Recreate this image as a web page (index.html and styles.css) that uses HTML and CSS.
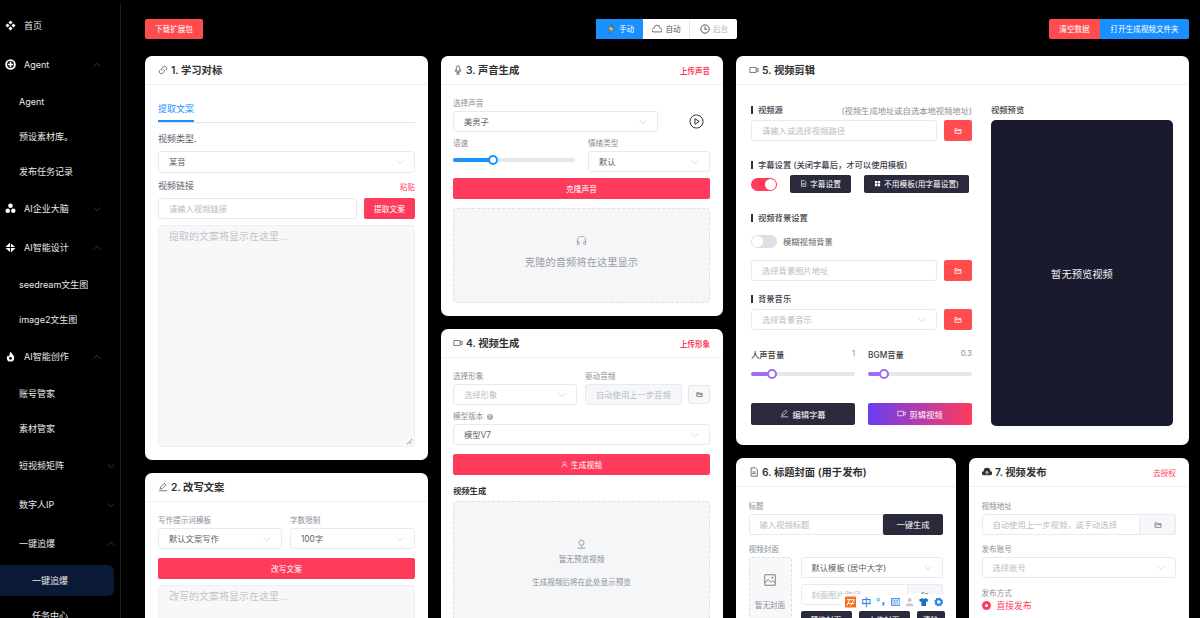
FILE: index.html
```html
<!DOCTYPE html>
<html lang="zh-CN">
<head>
    <meta charset="UTF-8">
    <title>一键追爆</title>
    <link rel="stylesheet" href="styles.css">
</head>
<body>
    <svg class="defs" width="0" height="0">
        <symbol id="i-folder" viewBox="0 0 24 24"><path d="M3 19V5h6l2 3h10v11z M3 11h18" fill="none" stroke="currentColor" stroke-width="2.4"/></symbol>
        <symbol id="i-chev" viewBox="0 0 24 24"><path d="M2 7l10 10L22 7" fill="none" stroke="currentColor" stroke-width="1.6"/></symbol>
        <symbol id="i-video" viewBox="0 0 24 24"><path d="M2 6h15v12H2z M17 10l5-2v8l-5-2" fill="none" stroke="currentColor" stroke-width="1.8"/></symbol>
        <symbol id="i-edit" viewBox="0 0 24 24"><path d="M5 17l1-5L15 3l4 4-9 9z M2 21h20" fill="none" stroke="currentColor" stroke-width="1.8"/></symbol>
    </svg>

    <div class="page">
        <aside class="sidebar">
            <div class="menu-title"><svg class="menu-icon" viewBox="0 0 24 24"><path d="M12 1l4.500 4.500L12 10 7.500 5.500z M12 14l4.500 4.500L12 23l-4.500-4.500z M5.500 7.500L10 12l-4.500 4.500L1 12z M18.500 7.500L23 12l-4.500 4.500L14 12z" fill="#fff"/></svg>首页</div>
            <div class="menu-title"><svg class="menu-icon" viewBox="0 0 24 24"><circle cx="12" cy="12" r="9.500" fill="none" stroke="#fff" stroke-width="4"/><path d="M12 6v12 M6 12h12" stroke="#fff" stroke-width="3.500"/></svg>Agent<svg class="chev up"><use href="#i-chev"/></svg></div>
            <div class="menu-item">Agent</div>
            <div class="menu-item">预设素材库。</div>
            <div class="menu-item">发布任务记录</div>
            <div class="menu-title"><svg class="menu-icon" viewBox="0 0 24 24"><circle cx="12" cy="6" r="5" fill="#fff"/><circle cx="6" cy="17" r="5" fill="#fff"/><circle cx="18" cy="17" r="5" fill="#fff"/><circle cx="12" cy="14" r="2" fill="#000"/></svg>AI企业大脑<svg class="chev"><use href="#i-chev"/></svg></div>
            <div class="menu-title"><svg class="menu-icon" viewBox="0 0 24 24"><path d="M11 1v10H1l5-5z M13 3l9 8h-9z M1 13h10v9z M13 13h10l-5 5-5 5z" fill="#fff"/></svg>AI智能设计<svg class="chev up"><use href="#i-chev"/></svg></div>
            <div class="menu-item">seedream文生图</div>
            <div class="menu-item">image2文生图</div>
            <div class="menu-title"><svg class="menu-icon" viewBox="0 0 24 24"><path d="M12 1c1 4 8 7 8 14a8 8 0 0 1-16 0c0-3 2-5 3-6 0 2 1 3 2 3 1-4 1-7 3-11z" fill="#fff"/><circle cx="12" cy="16" r="3" fill="#000"/></svg>AI智能创作<svg class="chev up"><use href="#i-chev"/></svg></div>
            <div class="menu-item">账号管家</div>
            <div class="menu-item">素材管家</div>
            <div class="menu-title plain">短视频矩阵<svg class="chev"><use href="#i-chev"/></svg></div>
            <div class="menu-title plain">数字人IP<svg class="chev"><use href="#i-chev"/></svg></div>
            <div class="menu-title plain">一键追爆<svg class="chev up"><use href="#i-chev"/></svg></div>
            <div class="menu-item sub active">一键追爆</div>
            <div class="menu-item sub">任务中心</div>
        </aside>

        <main class="main">
            <div class="toolbar">
                <button class="tool-btn red">下载扩展包</button>
                <div class="segment">
                    <div class="seg-item on"><svg viewBox="0 0 24 24"><path d="M14 1L4 14h7l-2 9 11-14h-7z" fill="#ffc53d" stroke="#333" stroke-width="1"/></svg>手动</div>
                    <div class="seg-item"><svg viewBox="0 0 24 24"><path d="M2 19a5 5 0 0 1 3-9 7 7 0 0 1 14 0 5 5 0 0 1 3 9z" fill="none" stroke="#555" stroke-width="2"/></svg>自动</div>
                    <div class="seg-item muted"><svg viewBox="0 0 24 24"><circle cx="12" cy="12" r="10" fill="none" stroke="#555" stroke-width="2.400"/><path d="M12 6v7h5" fill="none" stroke="#555" stroke-width="2.400"/></svg>后台</div>
                </div>
                <div class="tool-right">
                    <button class="tool-btn red">清空数据</button>
                    <button class="tool-btn blue">打开生成视频文件夹</button>
                </div>
            </div>

            <div class="columns">
                <div class="col col-1">
                    <section class="card">
                        <header class="card-head">
                            <h2><svg class="head-icon" viewBox="0 0 24 24"><path d="M10 14a5 5 0 0 1 0-7l3-3a5 5 0 0 1 7 7l-2 2 M14 10a5 5 0 0 1 0 7l-3 3a5 5 0 0 1-7-7l2-2" fill="none" stroke="#555" stroke-width="1.800"/></svg>1. 学习对标</h2>
                        </header>
                        <div class="card-body">
                            <div class="tabs"><span class="tab">提取文案</span></div>
                            <div class="label big mt-10">视频类型.</div>
                            <div class="field tall">某音<svg class="chev"><use href="#i-chev"/></svg></div>
                            <div class="label-row paste-row"><span class="label big">视频链接</span><a class="link small">粘贴</a></div>
                            <div class="row gap-7">
                                <div class="field grow ph">请输入视频链接</div>
                                <button class="btn pink w-51">提取文案</button>
                            </div>
                            <div class="textarea tall-area">提取的文案将显示在这里...<svg class="resize" viewBox="0 0 8 8"><path d="M1 7l6-6 M4 7l3-3" stroke="#888" stroke-width="1"/></svg></div>
                        </div>
                    </section>
                    <section class="card fill">
                        <header class="card-head">
                            <h2><svg class="head-icon"><use href="#i-edit"/></svg>2. 改写文案</h2>
                        </header>
                        <div class="card-body">
                            <div class="split gap-8">
                                <div class="cell"><div class="label">写作提示词模板</div><div class="field">默认文案写作<svg class="chev"><use href="#i-chev"/></svg></div></div>
                                <div class="cell"><div class="label">字数限制</div><div class="field">100字<svg class="chev"><use href="#i-chev"/></svg></div></div>
                            </div>
                            <button class="btn pink full mt-9">改写文案</button>
                            <div class="textarea">改写的文案将显示在这里...</div>
                        </div>
                    </section>
                </div>

                <div class="col col-2">
                    <section class="card">
                        <header class="card-head">
                            <h2><svg class="head-icon" viewBox="0 0 24 24"><rect x="8" y="2" width="8" height="13" rx="4" fill="none" stroke="#555" stroke-width="2"/><path d="M5 11a7 7 0 0 0 14 0 M12 18v4 M8 22h8" fill="none" stroke="#555" stroke-width="2"/></svg>3. 声音生成</h2>
                            <a class="link">上传声音</a>
                        </header>
                        <div class="card-body">
                            <div class="label">选择声音</div>
                            <div class="row">
                                <div class="field w-205">美男子<svg class="chev"><use href="#i-chev"/></svg></div>
                                <svg class="play" viewBox="0 0 24 24"><circle cx="12" cy="12" r="10.500" fill="none" stroke="#333" stroke-width="1.600"/><path d="M9.500 7.500l7 4.500-7 4.500z" fill="none" stroke="#333" stroke-width="1.600"/></svg>
                            </div>
                            <div class="split gap-13 mt-5">
                                <div class="cell"><div class="label">语速</div><div class="slider blue tall-slider"><i class="fill-bar" style="width:33%"></i></div></div>
                                <div class="cell"><div class="label">情绪类型</div><div class="field">默认<svg class="chev"><use href="#i-chev"/></svg></div></div>
                            </div>
                            <button class="btn pink full mt-6">克隆声音</button>
                            <div class="dash-box voice-box">
                                <svg class="box-icon" viewBox="0 0 24 24"><path d="M3 17v-5a9 9 0 0 1 18 0v5" fill="none" stroke="#8a8f99" stroke-width="1.600"/><rect x="3" y="14" width="4" height="7" rx="1.500" fill="none" stroke="#8a8f99" stroke-width="1.600"/><rect x="17" y="14" width="4" height="7" rx="1.500" fill="none" stroke="#8a8f99" stroke-width="1.600"/></svg>
                                <div class="box-text">克隆的音频将在这里显示</div>
                            </div>
                        </div>
                    </section>
                    <section class="card fill">
                        <header class="card-head">
                            <h2><svg class="head-icon"><use href="#i-video"/></svg>4. 视频生成</h2>
                            <a class="link">上传形象</a>
                        </header>
                        <div class="card-body">
                            <div class="row gap-8">
                                <div class="cell w-124"><div class="label">选择形象</div><div class="field ph">选择形象<svg class="chev"><use href="#i-chev"/></svg></div></div>
                                <div class="cell grow"><div class="label">驱动音频</div>
                                    <div class="row gap-6">
                                        <div class="field grow ph disabled">自动使用上一步音频</div>
                                        <button class="icon-btn"><svg><use href="#i-folder"/></svg></button>
                                    </div>
                                </div>
                            </div>
                            <div class="label mt-5">模型版本 <span class="help">?</span></div>
                            <div class="field">模型V7<svg class="chev"><use href="#i-chev"/></svg></div>
                            <button class="btn pink full mt-9"><svg class="btn-icon" viewBox="0 0 24 24"><circle cx="12" cy="8" r="5" fill="none" stroke="#fff" stroke-width="2"/><path d="M3 22a9 9 0 0 1 18 0" fill="none" stroke="#fff" stroke-width="2"/></svg>生成视频</button>
                            <div class="label strong mt-9">视频生成</div>
                            <div class="dash-box video-box">
                                <svg class="box-icon" viewBox="0 0 24 24"><circle cx="12" cy="8" r="5.500" fill="none" stroke="#8a8f99" stroke-width="1.800"/><path d="M12 14v5 M3 20h18" fill="none" stroke="#8a8f99" stroke-width="1.800"/></svg>
                                <div class="box-note">暂无预览视频</div>
                                <div class="box-note second">生成视频后将在此处显示预览</div>
                            </div>
                        </div>
                    </section>
                </div>

                <div class="col col-3">
                    <section class="card">
                        <header class="card-head">
                            <h2><svg class="head-icon"><use href="#i-video"/></svg>5. 视频剪辑</h2>
                        </header>
                        <div class="edit-body">
                            <div class="edit-left">
                                <div class="label-row">
                                    <span class="bar-label">视频源</span>
                                    <span class="hint">(视频生成地址或自选本地视频地址)</span>
                                </div>
                                <div class="row gap-7 mt-4">
                                    <div class="field grow ph">请输入或选择视频路径</div>
                                    <button class="red-btn"><svg><use href="#i-folder"/></svg></button>
                                </div>
                                <div class="bar-label mt-18">字幕设置 (关闭字幕后，才可以使用模板)</div>
                                <div class="row gap-13 mt-4 align-center">
                                    <span class="switch on"></span>
                                    <button class="dark-btn w-61"><svg viewBox="0 0 24 24"><path d="M5 2h10l5 5v15H5z M8 12h8 M8 16h8" fill="none" stroke="#fff" stroke-width="2.200"/></svg>字幕设置</button>
                                    <button class="dark-btn w-105"><svg viewBox="0 0 24 24"><path d="M3 3h8v8H3z M13 3h8v8h-8z M3 13h8v8H3z M13 13h8v8h-8z" fill="#fff"/></svg>不用模板(用字幕设置)</button>
                                </div>
                                <div class="bar-label mt-19">视频背景设置</div>
                                <div class="row switch-row">
                                    <span class="switch"></span>
                                    <span class="switch-text">模糊视频背景</span>
                                </div>
                                <div class="row gap-7 mt-12">
                                    <div class="field grow ph">选择背景图片地址</div>
                                    <button class="red-btn"><svg><use href="#i-folder"/></svg></button>
                                </div>
                                <div class="bar-label mt-12">背景音乐</div>
                                <div class="row gap-7 mt-4">
                                    <div class="field grow ph">选择背景音乐<svg class="chev"><use href="#i-chev"/></svg></div>
                                    <button class="red-btn"><svg><use href="#i-folder"/></svg></button>
                                </div>
                                <div class="split gap-13 mt-19">
                                    <div class="cell">
                                        <div class="label-row"><span class="vol-label">人声音量</span><span class="vol-val">1</span></div>
                                        <div class="slider purple vol-slider"><i class="fill-bar" style="width:20%"></i></div>
                                    </div>
                                    <div class="cell">
                                        <div class="label-row"><span class="vol-label">BGM音量</span><span class="vol-val">0.3</span></div>
                                        <div class="slider purple vol-slider"><i class="fill-bar" style="width:15%"></i></div>
                                    </div>
                                </div>
                                <div class="split gap-13 edit-actions">
                                    <button class="dark-btn action"><svg><use href="#i-edit"/></svg>编辑字幕</button>
                                    <button class="grad-btn action"><svg><use href="#i-video"/></svg>剪辑视频</button>
                                </div>
                            </div>
                            <div class="edit-right">
                                <div class="bar-label no-bar">视频预览</div>
                                <div class="preview">暂无预览视频</div>
                            </div>
                        </div>
                    </section>
                    <div class="bottom-row">
                        <section class="card fill">
                            <header class="card-head">
                                <h2><svg class="head-icon" viewBox="0 0 24 24"><path d="M5 2h10l5 5v15H5z M8 12h8 M8 16h8" fill="none" stroke="#555" stroke-width="2"/></svg>6. 标题封面 (用于发布)</h2>
                            </header>
                            <div class="card-body pt-13">
                                <div class="label">标题</div>
                                <div class="row">
                                    <div class="field grow ph joined">输入视频标题</div>
                                    <button class="dark-btn gen-btn">一键生成</button>
                                </div>
                                <div class="label mt-8">视频封面</div>
                                <div class="row gap-9">
                                    <div class="cover">
                                        <svg class="cover-icon" viewBox="0 0 24 24"><path d="M3 3h18v18H3z M3 17l6-6 5 5 3-3 4 4" fill="none" stroke="#777" stroke-width="1.600"/><circle cx="16" cy="8" r="1.500" fill="#777"/></svg>
                                        <span>暂无封面</span>
                                    </div>
                                    <div class="cell grow">
                                        <div class="field">默认模板 (居中大字)<svg class="chev"><use href="#i-chev"/></svg></div>
                                        <div class="row mt-6">
                                            <div class="field grow ph joined">封面图片路径</div>
                                            <div class="append w-35"><svg><use href="#i-folder"/></svg></div>
                                        </div>
                                        <div class="row gap-7 mt-6">
                                            <button class="dark-btn cover-btn">预览封面</button>
                                            <button class="dark-btn cover-btn">上传封面</button>
                                            <button class="dark-btn cover-btn last">清除</button>
                                        </div>
                                    </div>
                                </div>
                            </div>
                        </section>
                        <section class="card fill">
                            <header class="card-head">
                                <h2><svg class="head-icon" viewBox="0 0 24 24"><path d="M5 20a5 5 0 0 1-1-10 8 8 0 0 1 16 0 5 5 0 0 1-1 10z" fill="#333"/><path d="M12 18v-7 M8.500 14l3.500-3.500 3.500 3.500" fill="none" stroke="#fff" stroke-width="2"/></svg>7. 视频发布</h2>
                                <a class="link big-link">去授权</a>
                            </header>
                            <div class="card-body pt-13">
                                <div class="label">视频地址</div>
                                <div class="row">
                                    <div class="field grow ph joined">自动使用上一步视频，或手动选择</div>
                                    <div class="append w-36"><svg><use href="#i-folder"/></svg></div>
                                </div>
                                <div class="label mt-8">发布账号</div>
                                <div class="field ph">选择账号<svg class="chev"><use href="#i-chev"/></svg></div>
                                <div class="label mt-9">发布方式</div>
                                <div class="radio-row"><span class="radio"></span>直接发布</div>
                            </div>
                        </section>
                    </div>
                </div>
            </div>
        </main>
    </div>

    <div class="ime">
        <svg class="ime-logo" viewBox="0 0 12 12"><rect width="12" height="12" rx="1" fill="#f4701f"/><path d="M2 3.500h8M5 3.500L2 10M10 3.500L6 10M3 7.500h7" fill="none" stroke="#fff" stroke-width="1"/></svg>
        <span class="ime-zh">中</span>
        <svg viewBox="0 0 12 12"><circle cx="3" cy="3" r="1.600" fill="none" stroke="#2b83e0" stroke-width="1.100"/><path d="M8 7h2v1.500l-1.500 2" fill="none" stroke="#2b83e0" stroke-width="1.600"/></svg>
        <svg viewBox="0 0 12 12"><rect x=".5" y="1.500" width="11" height="9" fill="#cfe3f8" stroke="#2b83e0"/><path d="M2 4h8M2 6h8M3 8.500h6" stroke="#2b83e0" stroke-dasharray="1 1"/></svg>
        <svg viewBox="0 0 12 12"><circle cx="6" cy="3.500" r="2.500" fill="#c4c8ce"/><path d="M1 11.500a5 4 0 0 1 10 0z" fill="#c4c8ce"/></svg>
        <svg viewBox="0 0 12 12"><path d="M4 1L0 3l1.500 3L3 5v6h6V5l1.500 1L12 3 8 1 6 2.500z" fill="#1c6fc4"/></svg>
        <svg viewBox="0 0 12 12"><circle cx="6" cy="6" r="3.500" fill="none" stroke="#2b83e0" stroke-width="2.400"/><circle cx="6" cy="6" r="5" fill="none" stroke="#2b83e0" stroke-width="1.400" stroke-dasharray="2 1.900"/></svg>
    </div>
</body>
</html>
```
FILE: styles.css
```css
html, body {
    margin: 0;
    height: 618px;
    overflow: hidden;
    background: #000;
}

body {
    font-family: Inter, "Noto Sans CJK SC", sans-serif;
    font-size: 8.3px;
    color: #606266;
}

.defs {
    position: absolute;
}

button {
    font-family: inherit;
    border: none;
    cursor: pointer;
    padding: 0;
}

.page {
    display: flex;
    height: 618px;
}

/* sidebar */
.sidebar {
    width: 120px;
    flex: none;
    margin-top: 4px;
    padding-top: 2px;
    border-right: 1px solid #1e1e1e;
    overflow: hidden;
    color: #e8e8e8;
    font-size: 9px;
}

.menu-title {
    display: flex;
    align-items: center;
    height: 39px;
    padding-left: 5px;
    position: relative;
}

.menu-title.plain {
    padding-left: 19px;
}

.menu-icon {
    width: 11px;
    height: 11px;
    margin-right: 8px;
}

.menu-item {
    display: flex;
    align-items: center;
    height: 35px;
    padding-left: 19px;
}

.menu-item.sub {
    padding-left: 32px;
}

.menu-item.active {
    width: 82px;
    height: 31px;
    margin: 2px 0;
    background: #0a1a36;
    border-radius: 0 6px 6px 0;
}

.chev {
    width: 8px;
    height: 8px;
    color: #b4b8c0;
    flex: none;
}

.menu-title .chev {
    position: absolute;
    left: 93px;
    color: #666;
}

.menu-title.plain .chev {
    left: 107px;
}

.chev.up {
    transform: rotate(180deg);
}

/* main */
.main {
    flex: 1;
    min-width: 0;
    padding: 19px 11px 0 24px;
}

.toolbar {
    display: flex;
    justify-content: space-between;
    align-items: center;
    height: 20px;
    margin-bottom: 17px;
}

.tool-btn {
    height: 20px;
    padding: 0 10px 1px;
    font-size: 7.6px;
    color: #fff;
    border-radius: 2px;
}

.tool-btn.red {
    background: #ff4d4f;
}

.tool-btn.blue {
    background: #1890ff;
}

.tool-right {
    display: flex;
}

.tool-right .red {
    width: 51px;
    border-radius: 2px 0 0 2px;
}

.tool-right .blue {
    width: 89px;
    padding: 0 0 1px;
    border-radius: 0 2px 2px 0;
}

.segment {
    display: flex;
    margin-left: 82px;
    background: #fff;
    border-radius: 2px;
    overflow: hidden;
}

.seg-item {
    display: flex;
    align-items: center;
    justify-content: center;
    gap: 3px;
    width: 47px;
    height: 20px;
    padding-bottom: 1px;
    font-size: 7.6px;
    color: #555;
    border-right: 1px solid #e8e8e8;
    box-sizing: border-box;
}

.seg-item svg {
    width: 10px;
    height: 10px;
}

.seg-item.on {
    background: #1890ff;
    color: #fff;
    border-right: none;
}

.seg-item.muted {
    color: #b0b3b8;
    border-right: none;
}

.columns {
    display: grid;
    grid-template-columns: 283px 282px 453px;
    gap: 13px;
    align-items: start;
}

.col {
    display: flex;
    flex-direction: column;
    gap: 13px;
}

.card {
    background: #fff;
    border-radius: 7px;
}

.card.fill {
    height: 300px;
}

.card-head {
    display: flex;
    justify-content: space-between;
    align-items: center;
    height: 28px;
    padding: 0 13px;
    border-bottom: 1px solid #f0f0f0;
}

.col-2 .card-head {
    padding-left: 12px;
}

.card-head h2 {
    display: flex;
    align-items: center;
    margin: 0 0 1px;
    font-size: 10.3px;
    font-weight: 600;
    color: #303133;
}

.head-icon {
    width: 10px;
    height: 10px;
    margin-right: 3px;
    color: #555;
}

.link {
    color: #ff3b5c;
    font-size: 7.5px;
    font-weight: 600;
}

.link.small {
    font-weight: 400;
}

.big-link {
    font-weight: 400;
    font-size: 7.7px;
}

.card-body {
    padding: 12px 13px 13px;
}

.col-2 .card-body {
    padding-left: 12px;
}

.card-body.pt-13 {
    padding-top: 13px;
}

/* form bits */
.label {
    height: 12px;
    line-height: 14px;
    margin-bottom: 2px;
    font-size: 7.6px;
    color: #8a8f99;
}

.label.big {
    font-size: 9px;
    line-height: 12px;
    color: #606266;
    margin-bottom: 6px;
}

.label.strong {
    font-size: 8.3px;
    font-weight: 600;
    color: #303133;
    margin-bottom: 5px;
}

.label-row {
    display: flex;
    justify-content: space-between;
    align-items: center;
}

.paste-row {
    margin: 7px 0 6px;
}

.paste-row .label.big {
    margin-bottom: 0;
}

.help {
    display: inline-block;
    width: 6px;
    height: 6px;
    line-height: 6px;
    margin-left: 1px;
    border-radius: 50%;
    background: #a8abb2;
    color: #fff;
    font-size: 5px;
    text-align: center;
}

.field {
    display: flex;
    align-items: center;
    justify-content: space-between;
    box-sizing: border-box;
    height: 21px;
    padding: 0 10px 2px;
    background: #fff;
    border: 1px solid #e8eaf0;
    border-radius: 3px;
    font-size: 8.3px;
    color: #606266;
    white-space: nowrap;
}

.field .chev {
    margin-top: 2px;
}

.field.tall {
    height: 22px;
}

.field.ph {
    color: #b8bcc4;
}

.field.disabled {
    background: #f5f7fa;
}

.field.joined {
    border-radius: 3px 0 0 3px;
}

.row {
    display: flex;
}

.split {
    display: grid;
    grid-template-columns: 1fr 1fr;
}

.split.gap-8 {
    grid-template-columns: 124px 1fr;
}

.cell {
    min-width: 0;
}

.grow {
    flex: 1;
    min-width: 0;
}

.align-center {
    align-items: center;
}

.gap-6 { gap: 6px; }
.gap-7 { gap: 7px; }
.gap-8 { gap: 8px; }
.gap-9 { gap: 9px; }
.gap-13 { gap: 13px; }
.mt-4 { margin-top: 4px; }
.mt-5 { margin-top: 5px; }
.mt-6 { margin-top: 6px; }
.mt-8 { margin-top: 8px; }
.mt-9 { margin-top: 9px; }
.mt-10 { margin-top: 10px; }
.mt-12 { margin-top: 12px; }
.mt-18 { margin-top: 18px; }
.mt-19 { margin-top: 19px; }
.w-51 { width: 51px; }
.w-124 { width: 124px; flex: none; }
.w-205 { width: 205px; flex: none; }

.btn {
    height: 21px;
    padding-bottom: 1px;
    font-size: 7.7px;
    color: #fff;
    border-radius: 2px;
    flex: none;
}

.btn.pink {
    background: #ff3b5c;
}

.btn.full {
    display: flex;
    align-items: center;
    justify-content: center;
    width: 100%;
}

.btn-icon {
    width: 7px;
    height: 7px;
    margin-right: 3px;
}

.tabs {
    height: 24px;
    margin-top: 1px;
    border-bottom: 1px solid #dfe3f0;
}

.tab {
    display: inline-block;
    height: 22px;
    line-height: 21px;
    border-bottom: 2px solid #1890ff;
    color: #1890ff;
    font-size: 9px;
}

.textarea {
    position: relative;
    box-sizing: border-box;
    margin-top: 6px;
    padding: 3px 10px;
    height: 100px;
    background: #f8f8f9;
    border: 1px solid #eeeff2;
    border-radius: 3px;
    font-size: 10px;
    line-height: 14px;
    color: #c0c4cc;
}

.tall-area {
    height: 222px;
}

.resize {
    position: absolute;
    right: 1px;
    bottom: 1px;
    width: 7px;
    height: 7px;
}

.play {
    width: 15px;
    height: 15px;
    margin: 3px 0 0 31px;
}

.slider {
    position: relative;
    height: 4px;
    margin: 3px 0;
    background: #e4e7ed;
    border-radius: 2px;
}

.tall-slider {
    margin-top: 9px;
}

.vol-slider {
    margin-top: 11px;
}

.fill-bar {
    position: relative;
    display: block;
    height: 100%;
    border-radius: 2px;
}

.fill-bar::after {
    content: "";
    position: absolute;
    right: -5px;
    top: -3px;
    width: 6px;
    height: 6px;
    background: #fff;
    border: 2px solid;
    border-radius: 50%;
}

.slider.blue .fill-bar {
    background: #1890ff;
}

.slider.blue .fill-bar::after {
    border-color: #1890ff;
}

.slider.purple .fill-bar {
    background: #a06ef5;
}

.slider.purple .fill-bar::after {
    border-color: #a06ef5;
}

.dash-box {
    display: flex;
    flex-direction: column;
    align-items: center;
    box-sizing: border-box;
    background: #f5f6f8;
    border: 1px dashed #dcdfe6;
    border-radius: 4px;
}

.voice-box {
    height: 95px;
    margin-top: 9px;
    padding-top: 26px;
}

.video-box {
    height: 200px;
    padding-top: 37px;
}

.box-icon {
    width: 11px;
    height: 11px;
}

.box-text {
    margin-top: 8px;
    font-size: 10.3px;
    color: #9a9da3;
}

.box-note {
    margin-top: 3px;
    font-size: 7.6px;
    color: #8a8f99;
}

.box-note.second {
    margin-top: 12px;
}

.icon-btn {
    display: flex;
    align-items: center;
    justify-content: center;
    width: 22px;
    height: 19px;
    margin-top: 1px;
    flex: none;
    background: #f7f8fa;
    border: 1px solid #e4e7ed;
    border-radius: 3px;
    color: #555;
}

.icon-btn svg {
    width: 7px;
    height: 7px;
}

/* clip card */
.edit-body {
    display: flex;
    gap: 19px;
    padding: 19px 16px 19px 15px;
}

.edit-left {
    width: 221px;
    flex: none;
}

.edit-right {
    flex: 1;
    min-width: 0;
}

.bar-label {
    position: relative;
    height: 12px;
    line-height: 12px;
    padding-left: 7px;
    font-size: 8.3px;
    font-weight: 500;
    color: #3d4048;
}

.bar-label::before {
    content: "";
    position: absolute;
    left: 0;
    top: 2px;
    width: 2px;
    height: 8px;
    background: #303133;
}

.bar-label.no-bar {
    padding-left: 0;
}

.bar-label.no-bar::before {
    display: none;
}

.hint {
    font-size: 8.3px;
    color: #8a8f99;
}

.red-btn {
    display: flex;
    align-items: center;
    justify-content: center;
    width: 28px;
    height: 21px;
    flex: none;
    background: #ff4d4f;
    border-radius: 2px;
    color: #fff;
}

.red-btn svg {
    width: 8px;
    height: 8px;
}

.switch {
    position: relative;
    display: block;
    width: 26px;
    height: 13px;
    flex: none;
    background: #dcdfe6;
    border-radius: 7px;
}

.switch::after {
    content: "";
    position: absolute;
    left: 1px;
    top: 1px;
    width: 11px;
    height: 11px;
    background: #fff;
    border-radius: 50%;
}

.switch.on {
    background: #ff3b5c;
}

.switch.on::after {
    left: 14px;
}

.switch-row {
    align-items: center;
    gap: 6px;
    margin-top: 11px;
}

.switch-text {
    margin-top: -1px;
    font-size: 8.3px;
    color: #606266;
}

.dark-btn {
    display: flex;
    align-items: center;
    justify-content: center;
    gap: 3px;
    height: 18px;
    padding-bottom: 1px;
    flex: none;
    background: #2a2a3c;
    border-radius: 2px;
    color: #fff;
    font-size: 7.7px;
}

.dark-btn svg {
    width: 7px;
    height: 7px;
}

.w-61 { width: 61px; }
.w-105 { width: 105px; }

.vol-label {
    height: 12px;
    line-height: 12px;
    font-size: 8.3px;
    font-weight: 500;
    color: #3d4048;
}

.vol-val {
    font-size: 7.6px;
    color: #8a8f99;
    margin-top: -4px;
}

.edit-actions {
    margin-top: 24px;
}

.action {
    width: 100%;
    height: 22px;
    font-size: 8.3px;
}

.action svg {
    width: 9px;
    height: 9px;
}

.grad-btn {
    display: flex;
    align-items: center;
    justify-content: center;
    gap: 3px;
    padding-bottom: 1px;
    background: linear-gradient(90deg, #6a3df5, #ff3b5c);
    border-radius: 2px;
    color: #fff;
}

.preview {
    display: flex;
    align-items: center;
    justify-content: center;
    height: 306px;
    margin-top: 4px;
    background: #1a1a2e;
    border-radius: 5px;
    font-size: 10.3px;
    color: #f0f0f0;
}

.bottom-row {
    display: grid;
    grid-template-columns: 220px 220px;
    gap: 13px;
}

.bottom-row .card-body {
    padding-left: 12.5px;
}

.gen-btn {
    width: 60px;
    height: 21px;
    font-size: 8.3px;
}

.append {
    display: flex;
    align-items: center;
    justify-content: center;
    box-sizing: border-box;
    height: 21px;
    flex: none;
    background: #f5f7fa;
    border: 1px solid #e8eaf0;
    border-left: none;
    border-radius: 0 3px 3px 0;
    color: #777;
}

.append svg {
    width: 8px;
    height: 8px;
}

.w-35 { width: 35px; }
.w-36 { width: 36px; }

.cover {
    display: flex;
    flex-direction: column;
    align-items: center;
    box-sizing: border-box;
    width: 43px;
    height: 68px;
    flex: none;
    padding-top: 15px;
    background: #f7f8fa;
    border: 1px dashed #dcdfe6;
    border-radius: 3px;
    font-size: 7.6px;
    color: #8a8f99;
}

.cover-icon {
    width: 14px;
    height: 14px;
    margin-bottom: 12px;
}

.cover-btn {
    width: 51px;
}

.cover-btn.last {
    width: 28px;
}

.radio-row {
    display: flex;
    align-items: center;
    gap: 6px;
    height: 12px;
    margin-top: -2px;
    color: #ff3b5c;
    font-size: 8.8px;
}

.radio {
    box-sizing: border-box;
    width: 9px;
    height: 9px;
    background: #fff;
    border: 3px solid #ff3b5c;
    border-radius: 50%;
}

/* system IME bar, floats over the page */
.ime {
    position: absolute;
    left: 841px;
    top: 594px;
    display: flex;
    align-items: center;
    gap: 5px;
    box-sizing: border-box;
    width: 106px;
    height: 16px;
    padding: 0 4px;
    background: #fff;
    border-radius: 2px;
}

.ime svg {
    width: 10px;
    height: 10px;
}

.ime .ime-logo {
    width: 12px;
    height: 12px;
}

.ime-zh {
    width: 10px;
    font-size: 10px;
    line-height: 12px;
    color: #2b83e0;
    font-weight: 500;
}
```
